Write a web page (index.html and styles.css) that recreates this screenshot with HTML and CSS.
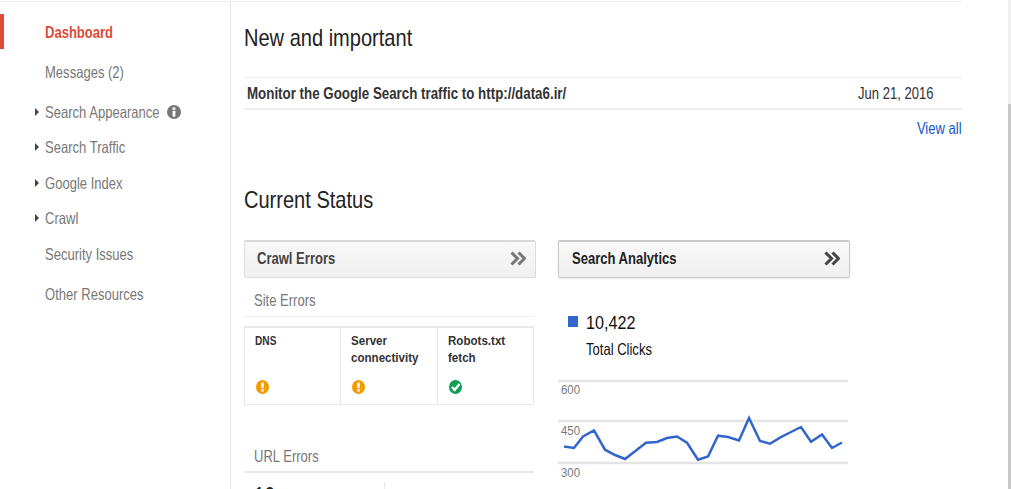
FILE: index.html
```html
<!DOCTYPE html>
<html lang="en">
<head>
<meta charset="utf-8">
<title>Dashboard</title>
<link rel="stylesheet" href="styles.css">
</head>
<body>
<div class="page">
  <div class="app">
    <nav class="side">
      <a class="item active"><span class="sq">Dashboard</span></a>
      <a class="item msg"><span class="sq">Messages (2)</span></a>
      <a class="item appearance arrow"><span class="sq">Search Appearance</span>
        <svg class="info" width="14" height="14" viewBox="0 0 14 14"><circle cx="7" cy="7" r="7" fill="#777"/><rect x="5.6" y="2.4" width="2.8" height="2.4" fill="#fff"/><rect x="5.6" y="5.8" width="2.8" height="5.8" fill="#fff"/></svg>
      </a>
      <a class="item traffic arrow"><span class="sq">Search Traffic</span></a>
      <a class="item index arrow"><span class="sq">Google Index</span></a>
      <a class="item crawl arrow"><span class="sq">Crawl</span></a>
      <a class="item security"><span class="sq">Security Issues</span></a>
      <a class="item other"><span class="sq">Other Resources</span></a>
    </nav>
    <main class="main">
      <h1 class="h-new"><span class="sq">New and important</span></h1>
      <div class="notice"><span class="notice-title sq">Monitor the Google Search traffic to http://data6.ir/</span><span class="notice-date sq sq-r">Jun 21, 2016</span></div>
      <div class="view-all"><a class="sq sq-r">View all</a></div>
      <h1 class="h-status"><span class="sq">Current Status</span></h1>
      <div class="cards">
        <section class="col">
          <div class="card-head"><span class="sq">Crawl Errors</span><svg class="chev" width="16" height="15" viewBox="0 0 16 15"><path d="M1.500 1.500 7.500 7.500 1.500 13.500M8.500 1.500 14.500 7.500 8.500 13.500" fill="none" stroke="#777" stroke-width="3"/></svg></div>
          <div class="sub site"><span class="sq">Site Errors</span></div>
          <div class="errs">
            <div class="err"><span class="err-name">DNS</span><svg width="13" height="14" viewBox="0 0 13 14"><ellipse cx="6.500" cy="7" rx="6.500" ry="7" fill="#f59b00"/><rect x="5.200" y="2.600" width="2.600" height="5.600" fill="#fff"/><rect x="5.200" y="9.300" width="2.600" height="2.200" fill="#fff"/></svg></div>
            <div class="err"><span class="err-name">Server connectivity</span><svg width="13" height="14" viewBox="0 0 13 14"><ellipse cx="6.500" cy="7" rx="6.500" ry="7" fill="#f59b00"/><rect x="5.200" y="2.600" width="2.600" height="5.600" fill="#fff"/><rect x="5.200" y="9.300" width="2.600" height="2.200" fill="#fff"/></svg></div>
            <div class="err"><span class="err-name">Robots.txt fetch</span><svg width="13" height="14" viewBox="0 0 13 14"><ellipse cx="6.500" cy="7" rx="6.500" ry="7" fill="#0f9d58"/><path d="M3 7l2.700 3L10.500 4" fill="none" stroke="#fff" stroke-width="2.400"/></svg></div>
          </div>
          <div class="sub url"><span class="sq">URL Errors</span></div>
          <div class="url-row"><span class="url-num sq">10</span></div>
        </section>
        <section class="col">
          <div class="card-head dark"><span class="sq">Search Analytics</span><svg class="chev" width="16" height="15" viewBox="0 0 16 15"><path d="M1.500 1.500 7.500 7.500 1.500 13.500M8.500 1.500 14.500 7.500 8.500 13.500" fill="none" stroke="#444" stroke-width="3"/></svg></div>
          <div class="metric">
            <span class="swatch"></span>
            <div><div class="metric-num"><span class="sq">10,422</span></div><div class="metric-label"><span class="sq">Total Clicks</span></div></div>
          </div>
          <svg class="chart" width="292" height="110" viewBox="0 0 292 110">
            <g stroke="#e4e4e4" stroke-width="2.500"><path d="M0 5H290M0 45H290M0 87H290"/></g>
            <g class="tick"><text x="3" y="18" textLength="19" lengthAdjust="spacingAndGlyphs">600</text><text x="3" y="59" textLength="19" lengthAdjust="spacingAndGlyphs">450</text><text x="3" y="101" textLength="19" lengthAdjust="spacingAndGlyphs">300</text></g>
            <polyline fill="none" stroke="#3366cc" stroke-width="2.500" points="6,70.500 16,72 25,60.500 36,54.500 47,73.700 57,79 67,83 78,74.500 88,66.700 99,66 109,62 119,60.500 129,66.700 140,83.700 150,80.500 160,59.700 170,61 181,64.500 191,42 202,65 212,67.700 222,61.700 232,56.500 243,51 253,65.700 264,58.500 274,72 284,66.500"/>
          </svg>
        </section>
      </div>
    </main>
  </div>
  <div class="scrollbar"><div class="thumb"></div></div>
</div>
</body>
</html>
```

FILE: styles.css
```css
* { box-sizing: border-box; }
html, body { margin: 0; height: 100%; overflow: hidden; background: #fff; }
body { font-family: "Liberation Sans", Arial, sans-serif; color: #222; }
.sq { display: inline-block; white-space: nowrap; transform: scaleX(.79); transform-origin: left center; }
.sq-r { transform-origin: right center; }
.page { display: flex; height: 489px; overflow: hidden; }
.app { display: flex; width: 962px; height: 640px; margin: 1px 46px 0 0; border-top: 1px solid #eeeeee; flex: none; }
.side { width: 231px; flex: none; border-right: 1px solid #e4e4e4; display: flex; flex-direction: column; position: relative; }
.item { display: block; position: relative; padding-left: 45px; font-size: 16.500px; line-height: 20px; color: #777; white-space: nowrap; }
.item.active { color: #dd4b39; font-weight: 700; margin-top: 12px; height: 35px; padding-top: 8px; border-left: 4px solid #dd4b39; padding-left: 41px; }
.msg { margin-top: 13px; }
.appearance { margin-top: 20px; display: flex; align-items: center; }
.traffic { margin-top: 15px; }
.index { margin-top: 16px; }
.crawl { margin-top: 15px; }
.security { margin-top: 16px; }
.other { margin-top: 20px; }
.arrow::before { content: ""; position: absolute; left: 35px; top: 6px; border-left: 4px solid #444; border-top: 4px solid transparent; border-bottom: 4px solid transparent; }
.info { margin: -1px 0 0 -23px; flex: none; }
.main { flex: 1; padding-left: 13px; display: flex; flex-direction: column; }
h1 { margin: 0; font-weight: 400; font-size: 24px; line-height: 30px; color: #222; }
h1 .sq { transform: scaleX(.835); }
.h-new { margin-top: 21px; }
.notice { margin-top: 24px; height: 33px; border-top: 1px solid #eeeeee; border-bottom: 2px solid #eeeeee; display: flex; justify-content: space-between; align-items: center; padding: 0 29px 0 3px; font-size: 16.500px; }
.notice-title { font-weight: 700; color: #333; transform: scaleX(.808); }
.notice-date { color: #333; }
.view-all { margin-top: 8px; text-align: right; font-size: 16.500px; line-height: 20px; color: #1155cc; }
.h-status { margin-top: 47px; }
.cards { display: flex; gap: 22px; margin-top: 25px; }
.col { width: 292px; flex: none; }
.card-head { height: 38px; display: flex; justify-content: space-between; align-items: center; padding: 0 9px 2px 12px; background: linear-gradient(#f8f8f8, #f0f0f0); border: 1px solid #dcdcdc; border-top: 2px solid #d8d8d8; border-radius: 2px; font-size: 16.500px; font-weight: 700; color: #444; }
.card-head .sq { flex: none; }
.chev { flex: none; }
.card-head.dark { color: #222; border-color: #c8c8c8; box-shadow: 0 1px 2px rgba(0,0,0,.1); padding-left: 13px; }
.sub { font-size: 16.500px; line-height: 20px; color: #777; padding-left: 10px; border-bottom: 1px solid #eeeeee; }
.site { margin-top: 12px; padding-bottom: 6px; width: 290px; }
.errs { display: flex; width: 290px; height: 79px; margin-top: 9px; border: 1px solid #e8e8e8; border-top-width: 2px; }
.err { flex: 1 1 0; padding: 4px 10px 10px; display: flex; flex-direction: column; justify-content: space-between; font-size: 13px; line-height: 17px; font-weight: 700; color: #333; }
.err + .err { border-left: 1px solid #e8e8e8; }
.err-name { display: block; transform: scaleX(.89); transform-origin: left top; }
.err:first-child .err-name { transform: scaleX(.78); }
.err svg { display: block; margin-left: 1px; }
.url { margin-top: 41px; padding-bottom: 5px; width: 290px; border-bottom-width: 2px; border-bottom-color: #e8e8e8; }
.url-row { display: flex; align-items: flex-start; height: 60px; width: 141px; margin-top: 9px; padding: 2px 0 0 10px; border-right: 1px solid #e8e8e8; }
.url-num { font-size: 24px; line-height: 24px; color: #222; }
.metric { display: flex; gap: 8px; margin-top: 33px; padding-left: 10px; }
.swatch { width: 10px; height: 11px; margin-top: 5px; background: #3366cc; }
.metric-num { font-size: 19px; line-height: 24px; color: #111; }
.metric-num .sq { transform: scaleX(.85); }
.metric-label { font-size: 16.500px; line-height: 20px; margin-top: 4px; color: #111; }
.chart { display: block; margin-top: 17px; }
.tick text { font-family: "Liberation Sans", Arial, sans-serif; font-size: 13px; fill: #777; }
.scrollbar { width: 3px; height: 489px; flex: none; background: #f0f0f0; padding-top: 104px; }
.thumb { height: 385px; background: #c8c8c8; }
```
